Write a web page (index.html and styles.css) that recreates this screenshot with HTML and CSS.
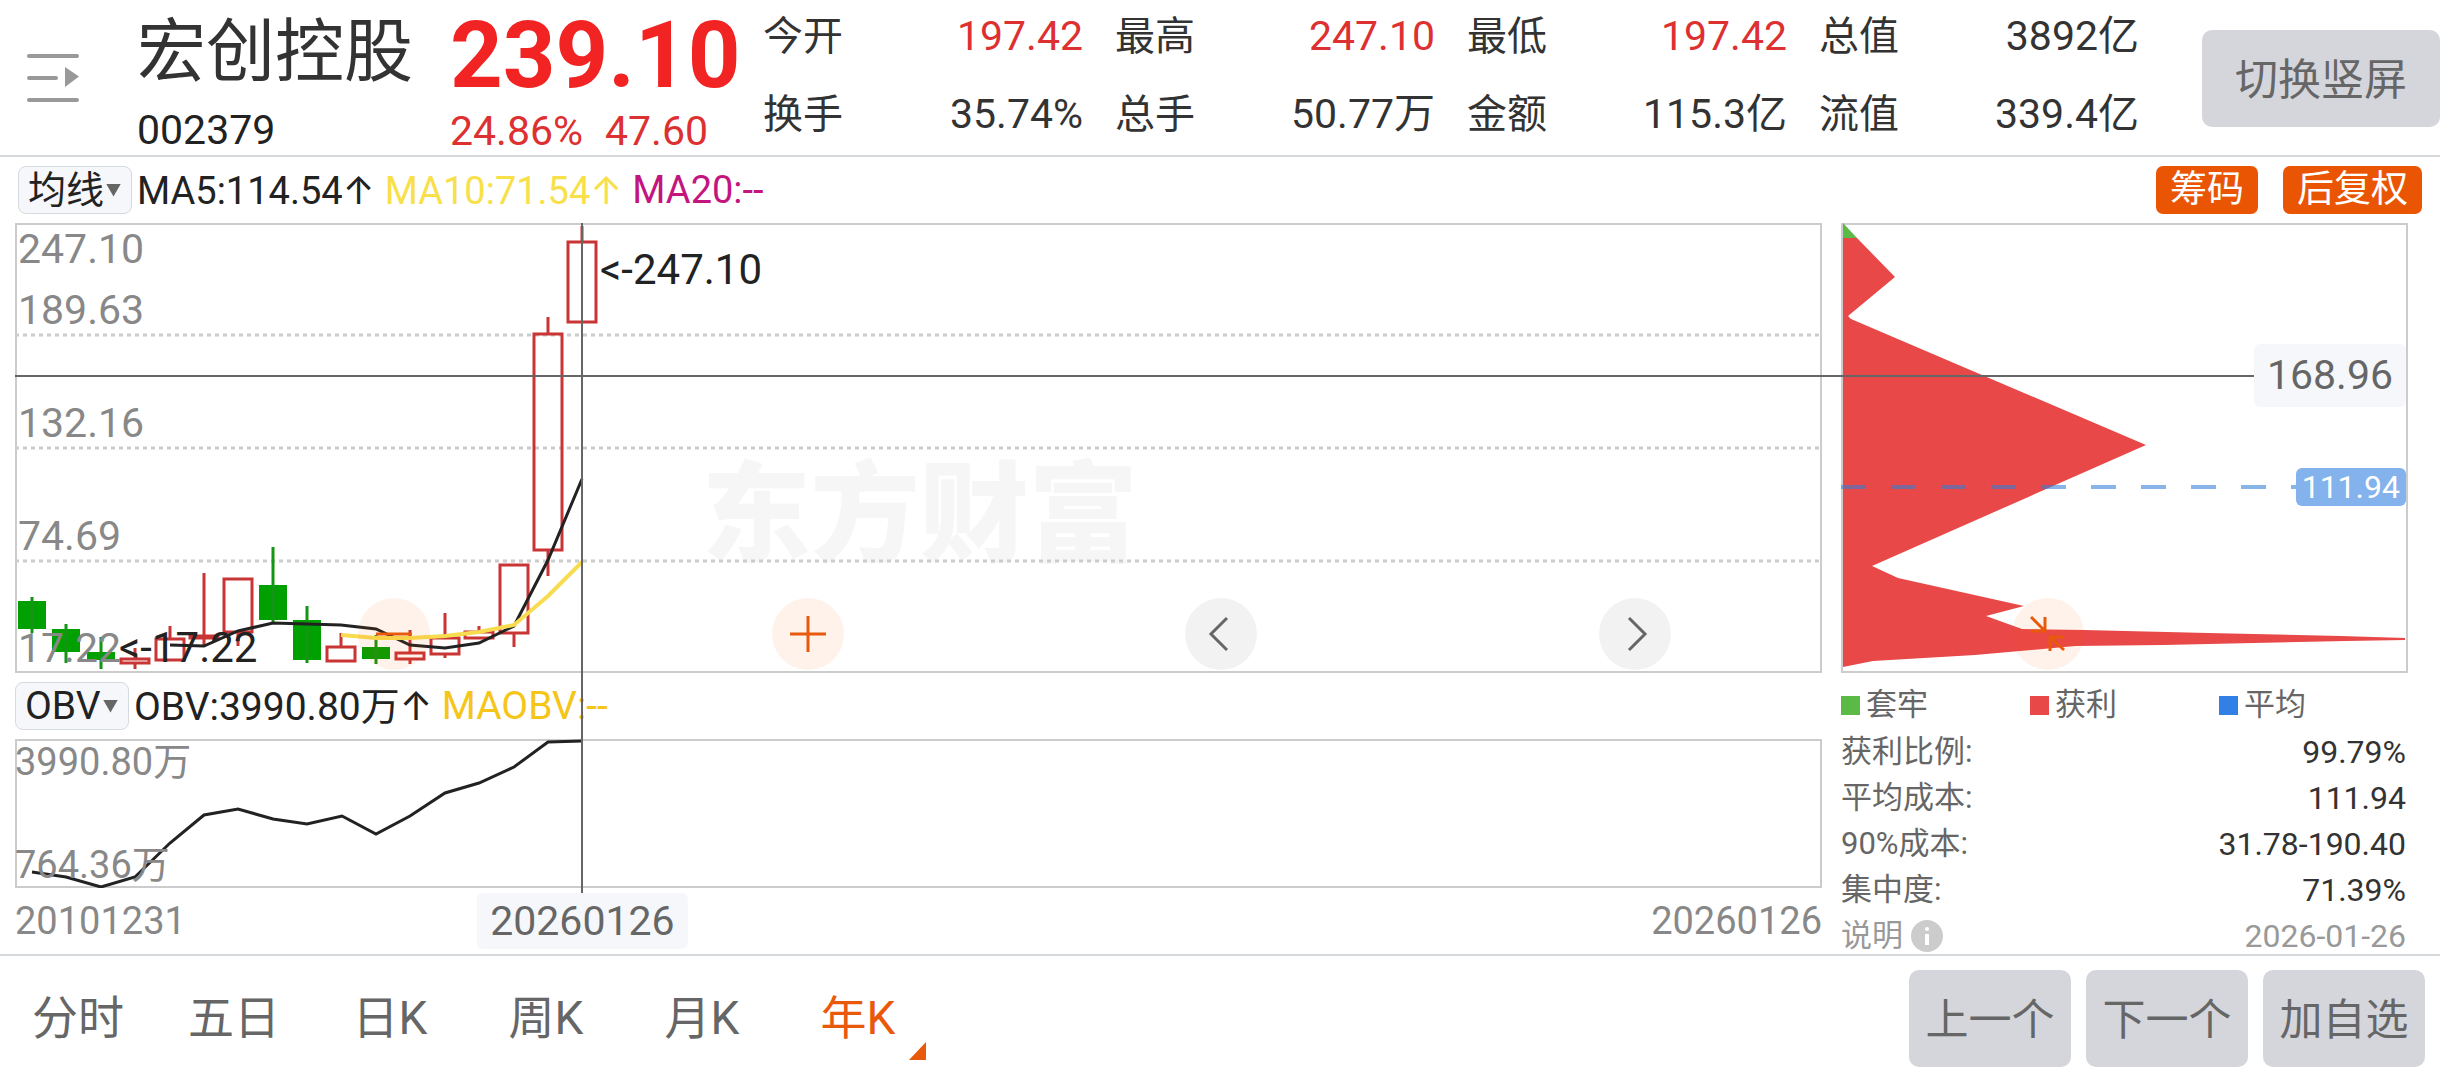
FILE: index.html
```
<!DOCTYPE html>
<html lang="zh-CN">
<head>
    <meta charset="UTF-8">
    <meta name="viewport" content="width=device-width, initial-scale=1.0">
    <title>宏创控股 002379</title>
    <link rel="stylesheet" href="styles.css">
</head>
<body>
    <header class="header">
        <button class="menu-btn" aria-label="列表">
            <svg width="52" height="50" viewBox="0 0 52 50">
                <path d="M2 3H50M2 25H29M2 47H50" stroke="#999" stroke-width="4" stroke-linecap="round"/>
                <path d="M38 14L52 23.500L38 34Z" fill="#999"/>
            </svg>
        </button>
        <div class="stock">
            <h1>宏创控股</h1>
            <p>002379</p>
        </div>
        <div class="price">
            <strong>239.10</strong>
            <p><span>24.86%</span><span>47.60</span></p>
        </div>
        <dl class="stats">
            <div><dt>今开</dt><dd class="up">197.42</dd></div>
            <div><dt>最高</dt><dd class="up">247.10</dd></div>
            <div><dt>最低</dt><dd class="up">197.42</dd></div>
            <div><dt>总值</dt><dd>3892亿</dd></div>
            <div><dt>换手</dt><dd>35.74%</dd></div>
            <div><dt>总手</dt><dd>50.77万</dd></div>
            <div><dt>金额</dt><dd>115.3亿</dd></div>
            <div><dt>流值</dt><dd>339.4亿</dd></div>
        </dl>
        <button class="gray-btn rotate-btn">切换竖屏</button>
    </header>

    <main>
        <div class="indicator top-indicator">
            <span class="picker">
                <select aria-label="主图指标"><option>均线</option></select>
            </span>
            <span>MA5:114.54<i class="arrow">↑</i></span>
            <span class="yellow">MA10:71.54<i class="arrow">↑</i></span>
            <span class="purple">MA20:--</span>
            <div class="tags">
                <button>筹码</button>
                <button>后复权</button>
            </div>
        </div>

        <div class="board">
            <section class="left">
                <div class="chart kline">
                    <span class="watermark">东方财富</span>
                    <svg viewBox="0 0 1807 450" preserveAspectRatio="none">
                        <!-- grid -->
                        <path d="M0 112H1807M0 225H1807M0 338H1807" stroke="#ccc" stroke-width="3" stroke-dasharray="4 4"/>
                        <!-- falling years -->
                        <g fill="#00a000">
                            <rect x="3" y="378" width="28" height="28"/>
                            <rect x="37" y="406" width="28" height="23"/>
                            <rect x="72" y="429" width="28" height="8"/>
                            <rect x="244" y="362" width="28" height="35"/>
                            <rect x="278" y="397" width="28" height="40"/>
                            <rect x="347" y="424" width="28" height="12"/>
                        </g>
                        <path d="M17 374V410M51 401V440M86 414V446M258 324V400M292 383V440M361 412V441" stroke="#159515" stroke-width="3"/>
                        <!-- rising years -->
                        <g fill="none" stroke="#c93434" stroke-width="3">
                            <rect x="106" y="436" width="28" height="4"/>
                            <rect x="141" y="416" width="28" height="21"/>
                            <rect x="175" y="413" width="28" height="2"/>
                            <rect x="209" y="356" width="28" height="53"/>
                            <rect x="312" y="424" width="28" height="14"/>
                            <rect x="381" y="430" width="28" height="6"/>
                            <rect x="416" y="415" width="28" height="16"/>
                            <rect x="450" y="409" width="28" height="6"/>
                            <rect x="485" y="342" width="28" height="68"/>
                            <rect x="519" y="111" width="28" height="216"/>
                            <rect x="553" y="19" width="28" height="80"/>
                            <path d="M120 425V436M120 440V446M155 403V415M189 350V413M189 416V422M223 410V423M326 410V424M395 407V430M395 436V441M430 390V415M430 431V435M464 403V409M499 411V424M533 94V110M533 328V353M567 3V18"/>
                        </g>
                        <!-- MA5 / MA10 -->
                        <polyline points="155,422 189,423 223,408 258,400 292,401 326,402 361,406 395,422 430,425 464,420 499,403 533,337 567,256" fill="none" stroke="#222" stroke-width="3"/>
                        <polyline points="326,412 361,415 395,415 430,413 464,409 499,402 533,373 567,339" fill="none" stroke="#f8dc50" stroke-width="4"/>
                    </svg>
                    <ul class="scale">
                        <li>247.10</li>
                        <li>189.63</li>
                        <li>132.16</li>
                        <li>74.69</li>
                        <li>17.22</li>
                    </ul>
                    <span class="note note-high">&lt;-247.10</span>
                    <span class="note note-low">&lt;-17.22</span>
                </div>

                <div class="indicator obv-indicator">
                    <span class="picker">
                        <select aria-label="副图指标"><option>OBV</option></select>
                    </span>
                    <span>OBV:3990.80万<i class="arrow">↑</i></span>
                    <span class="gold">MAOBV:--</span>
                </div>

                <div class="chart obv">
                    <svg viewBox="0 0 1807 149" preserveAspectRatio="none">
                        <polyline points="17,133 51,138 86,148 120,138 155,104 189,76 223,70 258,80 292,85 327,77 361,95 395,77 430,54 464,44 499,28 533,3 567,2" fill="none" stroke="#222" stroke-width="3"/>
                    </svg>
                    <ul class="obv-scale">
                        <li>3990.80万</li>
                        <li>764.36万</li>
                    </ul>
                </div>

                <div class="dates">
                    <span>20101231</span>
                    <span>20260126</span>
                </div>
                <div class="cross-v"></div>
                <span class="cross-date">20260126</span>
            </section>

            <section class="right">
                <div class="chart chips">
                    <svg viewBox="0 0 567 450" preserveAspectRatio="none">
                        <polygon points="2,15 16,15 54,54 7,93 10,96 305,222 31,343 57,355 183,383 145,393 181,406 243,407 367,410 500,413 564,415 564,417 505,418 322,422 234,423 179,428 134,432 32,438 2,444" fill="#e84848"/>
                        <polygon points="2,0 16,15 2,15" fill="#5bb946"/>
                        <path d="M0 264H456" stroke="#327dd8" stroke-opacity=".58" stroke-width="4" stroke-dasharray="25 25"/>
                    </svg>
                    <span class="avg-tag">111.94</span>
                </div>
                <ul class="legend">
                    <li class="trapped">套牢</li>
                    <li class="profit">获利</li>
                    <li class="average">平均</li>
                </ul>
                <dl class="cost">
                    <div><dt>获利比例:</dt><dd>99.79%</dd></div>
                    <div><dt>平均成本:</dt><dd>111.94</dd></div>
                    <div><dt>90%成本:</dt><dd>31.78-190.40</dd></div>
                    <div><dt>集中度:</dt><dd>71.39%</dd></div>
                    <div class="muted">
                        <dt>说明
                            <svg width="32" height="32" viewBox="0 0 32 32">
                                <circle cx="16" cy="16" r="16" fill="#ccc"/>
                                <circle cx="16" cy="9" r="2" fill="#fff"/>
                                <path d="M16 14V25" stroke="#fff" stroke-width="4"/>
                            </svg>
                        </dt>
                        <dd>2026-01-26</dd>
                    </div>
                </dl>
            </section>

            <div class="cross-h"><span>168.96</span></div>

            <div class="tools">
                <button class="warm" aria-label="缩小">
                    <svg width="36" height="36" viewBox="0 0 36 36"><path d="M0 18H36"/></svg>
                </button>
                <button class="warm" aria-label="放大">
                    <svg width="36" height="36" viewBox="0 0 36 36"><path d="M0 18H36M18 0V36"/></svg>
                </button>
                <button aria-label="左移">
                    <svg width="36" height="36" viewBox="0 0 36 36"><path d="M24 2L8 18L24 34"/></svg>
                </button>
                <button aria-label="右移">
                    <svg width="36" height="36" viewBox="0 0 36 36"><path d="M12 2L28 18L12 34"/></svg>
                </button>
                <button class="warm" aria-label="收起">
                    <svg width="36" height="36" viewBox="0 0 36 36"><path d="M1 1L15 15M15 1V15H1M34 34L20 21M34 21H20V35"/></svg>
                </button>
            </div>
        </div>
    </main>

    <footer class="footer">
        <nav class="tabs">
            <button>分时</button>
            <button>五日</button>
            <button>日K</button>
            <button>周K</button>
            <button>月K</button>
            <button class="active">年K</button>
        </nav>
        <div class="actions">
            <button class="gray-btn">上一个</button>
            <button class="gray-btn">下一个</button>
            <button class="gray-btn">加自选</button>
        </div>
    </footer>
</body>
</html>
```

FILE: styles.css
```
* {
    margin: 0;
    padding: 0;
    box-sizing: border-box;
}

body {
    display: flex;
    flex-direction: column;
    min-height: 100vh;
    background-color: #fff;
    color: #333;
    font-family: Roboto, "Noto Sans CJK SC", sans-serif;
    font-size: 40px;
    white-space: nowrap;
}

button,
select {
    font: inherit;
    color: inherit;
    border: none;
    background: none;
    cursor: pointer;
}

ul {
    list-style: none;
}

svg {
    display: block;
}

/* Header */
.header {
    display: flex;
    align-items: flex-start;
    padding: 1px 0 0 27px;
    border-bottom: 2px solid #d5d9dc;
}

.menu-btn {
    width: 52px;
    margin-right: 58px;
    align-self: center;
}

.stock {
    width: 313px;
}

.stock h1 {
    font-size: 69px;
    font-weight: 400;
    line-height: 104px;
}

.stock p {
    font-size: 41px;
    line-height: 50px;
    color: #222;
}

.price {
    width: 313px;
    color: #dd3030;
}

.price strong {
    display: block;
    font-size: 92px;
    line-height: 110px;
    color: #f22323;
}

.price p {
    display: flex;
    gap: 22px;
    font-size: 41px;
    line-height: 40px;
}

.stats {
    flex: 1;
    display: grid;
    grid-template-columns: repeat(4, 1fr);
    gap: 7px 32px;
    line-height: 71px;
}

.stats div {
    display: flex;
    justify-content: space-between;
}

.stats dd {
    font-size: 41px;
}

.up {
    color: #dd3030;
}

.gray-btn {
    border-radius: 10px;
    background-color: #d5d6dc;
    color: #666;
    font-size: 43px;
    height: 97px;
    width: 162px;
    padding-bottom: 5px;
}

.rotate-btn {
    width: 238px;
    margin-left: 63px;
    align-self: center;
}

/* Indicator rows */
.indicator {
    display: flex;
    align-items: center;
    gap: 10px;
    height: 66px;
    font-size: 38px;
    line-height: 46px;
    color: #222;
}

.top-indicator {
    padding: 0 18px;
}

.obv-indicator {
    font-size: 39px;
}

.picker {
    display: flex;
    align-items: center;
    width: 114px;
    height: 48px;
    margin-right: -5px;
    padding-left: 9px;
    border: 1px solid #d5d9e0;
    border-radius: 8px;
    background-color: #f5f7fa;
}

.picker select {
    appearance: none;
    width: 78px;
    height: 46px;
}

.picker::after {
    content: "";
    width: 15px;
    height: 13px;
    background-color: #666;
    clip-path: polygon(0 0, 100% 0, 50% 100%);
}

.arrow {
    display: inline-block;
    width: 32px;
    font-family: Inter, sans-serif;
    font-style: normal;
    text-align: center;
}

.yellow {
    color: #f8e04a;
}

.purple {
    color: #c4157f;
}

.gold {
    color: #f5c518;
}

.tags {
    display: flex;
    gap: 25px;
    margin-left: auto;
}

.tags button {
    height: 48px;
    padding: 0 14px;
    border-radius: 7px;
    background-color: #ea5504;
    color: #fff;
    font-size: 37px;
    line-height: 46px;
}

/* Charts */
.board {
    position: relative;
    display: grid;
    grid-template-columns: 1807fr 567fr;
    gap: 19px;
    padding: 0 32px 0 15px;
}

.left,
.right {
    position: relative;
    min-width: 0;
}

.chart {
    position: relative;
    box-shadow: inset 0 0 0 2px #ccc;
}

.chart svg {
    position: relative;
    width: 100%;
}

.kline,
.kline svg,
.chips,
.chips svg {
    height: 450px;
}

.obv,
.obv svg {
    height: 149px;
}

.watermark {
    position: absolute;
    top: 223px;
    left: 38%;
    font-size: 109px;
    font-weight: 900;
    line-height: 140px;
    color: #f6f6f6;
}

.scale {
    position: absolute;
    top: 0;
    left: 3px;
    display: grid;
    grid-template-rows: 51px 61px 113px 113px 112px;
    align-items: end;
    font-size: 41px;
    line-height: 50px;
    color: #888;
}

.obv-scale {
    position: absolute;
    top: 0;
    left: 0;
    bottom: 0;
    display: flex;
    flex-direction: column;
    justify-content: space-between;
    font-size: 38px;
    line-height: 46px;
    color: #888;
}

.note {
    position: absolute;
    font-size: 42px;
    line-height: 50px;
    color: #222;
}

.note-high {
    top: 22px;
    left: 585px;
}

.note-low {
    top: 400px;
    left: 104px;
}

.dates {
    display: flex;
    justify-content: space-between;
    font-size: 38px;
    line-height: 66px;
    color: #888;
}

/* Crosshair */
.cross-v {
    position: absolute;
    top: 0;
    bottom: 60px;
    left: 31.3%;
    width: 2px;
    background-color: #666;
}

.cross-date {
    position: absolute;
    bottom: 5px;
    left: 31.4%;
    transform: translateX(-50%);
    padding: 0 13px;
    border-radius: 6px;
    background-color: #f5f7fa;
    font-size: 41px;
    line-height: 56px;
    color: #666;
}

.cross-h {
    position: absolute;
    top: 121px;
    left: 15px;
    right: 34px;
    display: flex;
    align-items: center;
}

.cross-h::before {
    content: "";
    flex: 1;
    height: 2px;
    background-color: #666;
}

.cross-h span {
    padding: 0 13px;
    border-radius: 6px;
    background-color: #f5f7fa;
    font-size: 41px;
    line-height: 63px;
    color: #666;
}

.avg-tag {
    position: absolute;
    top: 245px;
    right: 2px;
    padding: 0 6px;
    border-radius: 6px;
    background-color: #83b2ec;
    font-size: 32px;
    line-height: 38px;
    color: #fff;
}

/* Round buttons over the charts */
.tools {
    position: absolute;
    top: 375px;
    left: 358px;
    right: 356px;
    display: flex;
    justify-content: space-between;
}

.tools button {
    display: grid;
    place-items: center;
    width: 72px;
    height: 72px;
    border-radius: 50%;
    background-color: rgba(0, 0, 0, 0.05);
}

.tools .warm {
    background-color: rgba(255, 85, 4, 0.08);
}

.tools path {
    fill: none;
    stroke: #666;
    stroke-width: 3;
}

.tools .warm path {
    stroke: #e8590c;
}

/* Chip distribution */
.legend {
    display: grid;
    grid-template-columns: repeat(3, 1fr);
    font-size: 31px;
    line-height: 58px;
    padding-top: 3px;
    color: #666;
}

.legend li {
    display: flex;
    align-items: center;
    gap: 6px;
}

.legend li::before {
    content: "";
    width: 19px;
    height: 19px;
    background-color: #5bb946;
}

.legend .profit::before {
    background-color: #e84848;
}

.legend .average::before {
    background-color: #327fe5;
}

.cost {
    display: grid;
    gap: 10px;
    padding-right: 2px;
    font-size: 31px;
    line-height: 36px;
}

.cost div {
    display: flex;
    justify-content: space-between;
    height: 36px;
}

.cost dt {
    display: flex;
    align-items: center;
    gap: 8px;
    color: #666;
}

.cost dd {
    font-size: 32px;
}

.cost .muted dt,
.cost .muted dd {
    color: #999;
}

/* Footer */
.footer {
    flex: 1;
    display: flex;
    justify-content: space-between;
    padding-right: 15px;
    border-top: 2px solid #d5d9dc;
}

.tabs {
    display: flex;
}

.tabs button {
    position: relative;
    width: 156px;
    padding-bottom: 9px;
    font-size: 46px;
    color: #666;
}

.tabs .active {
    color: #e8590c;
}

.tabs .active::after {
    content: "";
    position: absolute;
    right: 10px;
    bottom: 20px;
    width: 17px;
    height: 18px;
    background-color: #e8590c;
    clip-path: polygon(100% 0, 100% 100%, 0 100%);
}

.actions {
    display: flex;
    align-items: center;
    gap: 15px;
}
```
